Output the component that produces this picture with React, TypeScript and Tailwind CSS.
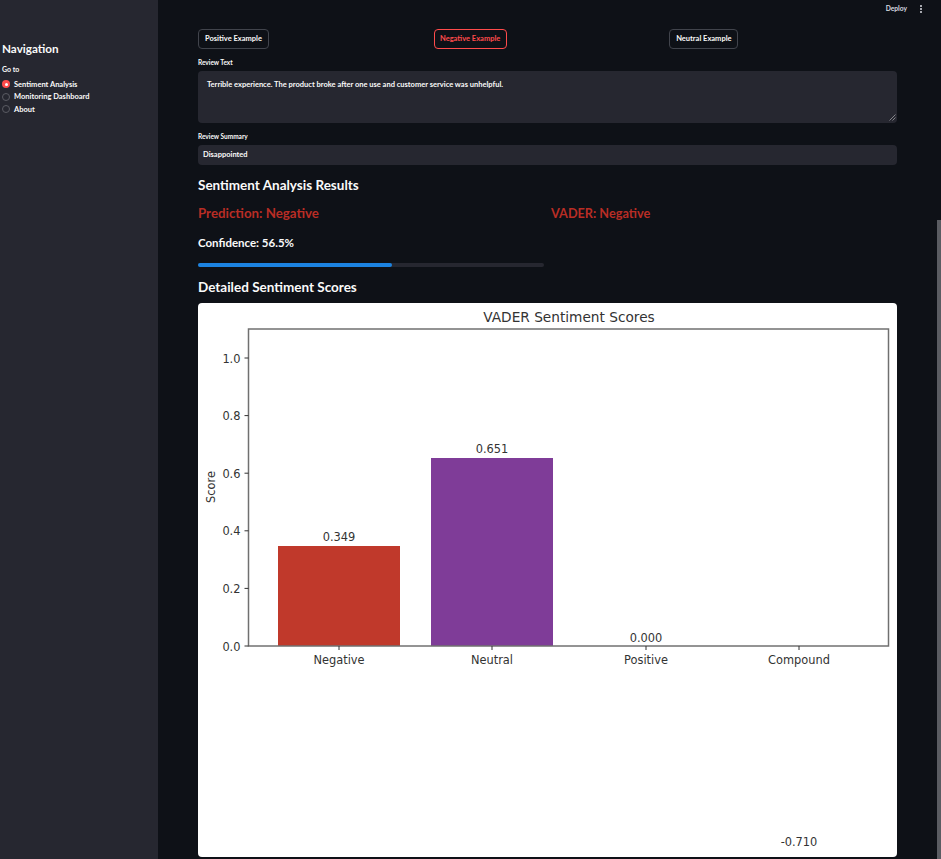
const font = { fontFamily: 'Lato, "Noto Sans", sans-serif' };

const navItems = ["Sentiment Analysis", "Monitoring Dashboard", "About"];

function Sidebar() {
  return (
    <aside className="flex w-[158px] shrink-0 flex-col bg-[#262730] pl-[2px] pt-[41px] text-[#fafafa]">
      <h2 className="text-[11.7px] font-bold leading-[14px]">Navigation</h2>
      <p className="mt-[10px] text-[7px] font-bold leading-[9px]">Go to</p>
      <div className="mt-[4px] flex flex-col">
        {navItems.map((item, i) => (
          <div key={item} className="flex h-[12.5px] items-center gap-[4px]">
            {i === 0 ? (
              <span className="flex size-[8px] items-center justify-center rounded-full bg-[#ff4b4b]">
                <span className="size-[3px] rounded-full bg-white" />
              </span>
            ) : (
              <span className="size-[8px] rounded-full border border-[#5a5b63]" />
            )}
            <span className="text-[7.5px] font-bold leading-[9px]">{item}</span>
          </div>
        ))}
      </div>
    </aside>
  );
}

function ExampleButton({ label, active, width }: { label: string; active?: boolean; width: string }) {
  return (
    <button
      className={`block h-[20px] rounded-[4px] border text-center text-[7.5px] font-bold leading-none ${width} ${active ? "border-[#ff4b4b] text-[#ff4b4b]" : "border-[#41444c] text-[#fafafa]"}`}
    >
      {label}
    </button>
  );
}

function ScoreChart() {
  const yTicks = [0, 0.2, 0.4, 0.6, 0.8, 1];
  const axisLeft = 50.5;
  const axisBottom = 343;
  const scoreY = (v: number) => axisBottom - v * 288;
  const labels = [
    { name: "Negative", x: 141 },
    { name: "Neutral", x: 294 },
    { name: "Positive", x: 448 },
    { name: "Compound", x: 601 },
  ];
  return (
    <svg viewBox="0 0 699 554" className="block h-[554px] w-[699px]" fontFamily='"DejaVu Sans", sans-serif' fill="#333333">
      <text x="371" y="19" fontSize="13.7" textAnchor="middle">VADER Sentiment Scores</text>
      <rect x="80" y="243" width="122" height="100" fill="#c0392b" />
      <rect x="233" y="155" width="122" height="188" fill="#7f3c98" />
      <rect x={axisLeft} y="26" width="640" height="317" fill="none" stroke="#707070" strokeWidth="1.5" />
      {yTicks.map((t) => (
        <g key={t}>
          <line x1={axisLeft - 4} x2={axisLeft} y1={scoreY(t)} y2={scoreY(t)} stroke="#333" />
          <text x={axisLeft - 8} y={scoreY(t) + 4.5} fontSize="11.4" textAnchor="end">{t.toFixed(1)}</text>
        </g>
      ))}
      {labels.map((l) => (
        <g key={l.name}>
          <line x1={l.x} x2={l.x} y1={axisBottom} y2={axisBottom + 4} stroke="#333" />
          <text x={l.x} y={axisBottom + 18} fontSize="11.4" textAnchor="middle">{l.name}</text>
        </g>
      ))}
      <text x="141" y="238" fontSize="11.4" textAnchor="middle">0.349</text>
      <text x="294" y="150" fontSize="11.4" textAnchor="middle">0.651</text>
      <text x="448" y="339" fontSize="11.4" textAnchor="middle">0.000</text>
      <text x="601" y="543" fontSize="11.4" textAnchor="middle">-0.710</text>
      <text x="17" y="184" fontSize="11.4" textAnchor="middle" transform="rotate(-90 17 184)">Score</text>
    </svg>
  );
}

export default function App() {
  return (
    <div style={font} className="relative flex h-[859px] w-[941px] overflow-hidden bg-[#0e1117]">
      <Sidebar />
      <main className="flex min-w-0 flex-1 flex-col text-[#fafafa]">
        <header className="flex h-[29px] items-start justify-end pr-[19px] pt-[4px]">
          <span className="text-[6.7px] font-bold leading-[9px] text-[#d8dae0]">Deploy</span>
          <span className="ml-[13px] flex flex-col gap-[1px] pt-[1px]">
            <span className="size-[2px] rounded-full bg-[#d8dae0]" />
            <span className="size-[2px] rounded-full bg-[#d8dae0]" />
            <span className="size-[2px] rounded-full bg-[#d8dae0]" />
          </span>
        </header>
        <div className="ml-[40px] flex w-[699px] flex-col">
          <div className="grid grid-cols-3 gap-[8px]">
            <ExampleButton label="Positive Example" width="w-[71px]" />
            <ExampleButton label="Negative Example" width="w-[73px]" active />
            <ExampleButton label="Neutral Example" width="w-[69px]" />
          </div>
          <label className="mt-[6px] text-[6.5px] font-bold leading-[16px]">Review Text</label>
          <div className="relative h-[52px] rounded-[4px] bg-[#262730] px-[9px] pt-[9px] text-[7.5px] font-bold leading-[10px]">
            Terrible experience. The product broke after one use and customer service was unhelpful.
            <svg viewBox="0 0 7 7" className="absolute bottom-[2px] right-[1px] size-[7px]" stroke="#9a9ba0" strokeWidth="0.8">
              <line x1="0.5" y1="6.5" x2="6.5" y2="0.5" />
              <line x1="3.5" y1="6.5" x2="6.5" y2="3.5" />
            </svg>
          </div>
          <label className="mt-[6px] text-[6.5px] font-bold leading-[16px]">Review Summary</label>
          <div className="flex h-[20px] items-center rounded-[4px] bg-[#262730] px-[5px] text-[7.5px] font-bold">Disappointed</div>
          <h3 className="mt-[11px] text-[13.5px] font-bold leading-[18px]">Sentiment Analysis Results</h3>
          <div className="mt-[10px] grid grid-cols-2 gap-[7px]">
            <div>
              <p className="text-[13.3px] font-bold leading-[18px] text-[#b92d25]">Prediction: Negative</p>
              <p className="mt-[14px] text-[11.5px] font-bold leading-[14px]">Confidence: 56.5%</p>
              <div className="mt-[13px] h-[4px] rounded-full bg-[#262730]">
                <div className="h-full w-[56%] rounded-full bg-[#1c83e1]" />
              </div>
            </div>
            <p className="text-[12.7px] font-bold leading-[18px] text-[#b92d25]">VADER: Negative</p>
          </div>
          <h3 className="mt-[11px] text-[13.5px] font-bold leading-[18px]">Detailed Sentiment Scores</h3>
          <div className="mt-[7px] overflow-hidden rounded-[4px] bg-white">
            <ScoreChart />
          </div>
        </div>
      </main>
      <div className="absolute bottom-0 right-0 top-[220px] w-[4px] bg-[#5a5c62]" />
    </div>
  );
}
